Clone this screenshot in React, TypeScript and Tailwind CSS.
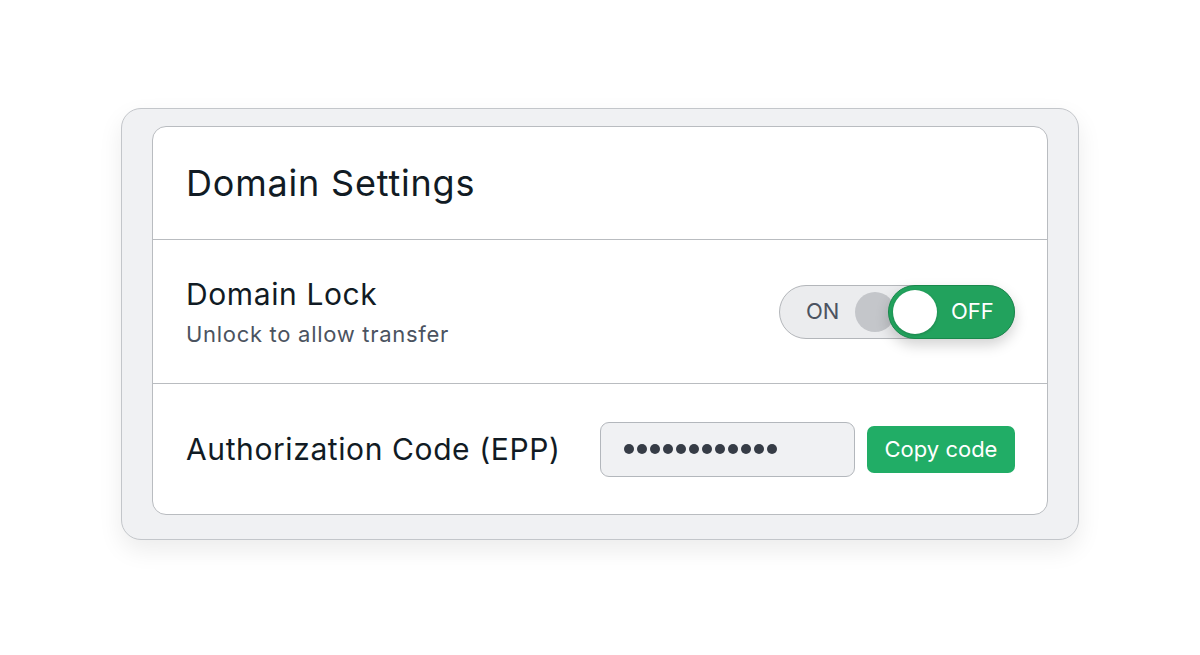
import React from 'react';

export default function App() {
  return (
    <div className="min-h-[655px] w-full bg-white pt-[108px]" style={{ fontFamily: 'Inter, "Noto Sans", sans-serif' }}>
      {/* Outer frame */}
      <div className="mx-auto w-[958px] rounded-[20px] border border-[#c3c6ca] bg-[#f0f1f3] px-[30px] pt-[17px] pb-[24px] shadow-[0_10px_24px_rgba(0,0,0,0.08)]">
        <div className="rounded-[14px] border border-[#b9bcc0] bg-white">
          {/* Header */}
          <div className="flex h-[113px] items-center border-b border-[#b9bcc0] pl-[33px]">
            <h1 className="text-[36px] font-normal tracking-[0.8px] text-[#111b24]">Domain Settings</h1>
          </div>

          {/* Domain lock */}
          <div className="flex h-[144px] items-center justify-between border-b border-[#b9bcc0] pl-[33px] pr-[32px]">
            <div className="flex flex-col">
              <span className="text-[30px] leading-[36px] tracking-[0.6px] text-[#111b24]">Domain Lock</span>
              <span className="mt-[8px] text-[22px] leading-[28px] tracking-[0.7px] text-[#4b5360]">Unlock to allow transfer</span>
            </div>
            <LockToggle />
          </div>

          {/* Auth code */}
          <div className="flex h-[130px] items-center justify-between pl-[33px] pr-[32px]">
            <span className="text-[30px] tracking-[0.6px] text-[#111b24]">Authorization Code (EPP)</span>
            <div className="flex items-center gap-[12px]">
              <div className="flex h-[55px] w-[255px] items-center gap-[3px] rounded-[9px] border border-[#b3b7bc] bg-[#f0f1f3] pl-[23px]">
                {Array.from({ length: 12 }).map((_, i) => (
                  <span key={i} className="h-[10px] w-[10px] rounded-full bg-[#363c46]" />
                ))}
              </div>
              <button className="flex h-[47px] w-[148px] items-center justify-center rounded-[7px] bg-[#21ad66] text-[22px] text-white">
                Copy code
              </button>
            </div>
          </div>
        </div>
      </div>
    </div>
  );
}

function LockToggle() {
  return (
    <div className="relative h-[54px] w-[236px]">
      <div className="flex h-full w-full items-center rounded-full border border-[#b3b6ba] bg-[#ebecee] pl-[26px]">
        <span className="text-[22px] text-[#4b5360]">ON</span>
        <span className="ml-[16px] h-[40px] w-[40px] rounded-full bg-[#c4c6ca]" />
      </div>
      <div className="absolute top-0 right-0 flex h-[54px] w-[127px] items-center rounded-full border border-[#18884b] bg-[#22a25d] pl-[4px] shadow-[0_6px_14px_rgba(0,0,0,0.18)]">
        <span className="h-[44px] w-[44px] rounded-full bg-white shadow-[0_1px_3px_rgba(0,0,0,0.2)]" />
        <span className="ml-[14px] text-[22px] text-white">OFF</span>
      </div>
    </div>
  );
}
